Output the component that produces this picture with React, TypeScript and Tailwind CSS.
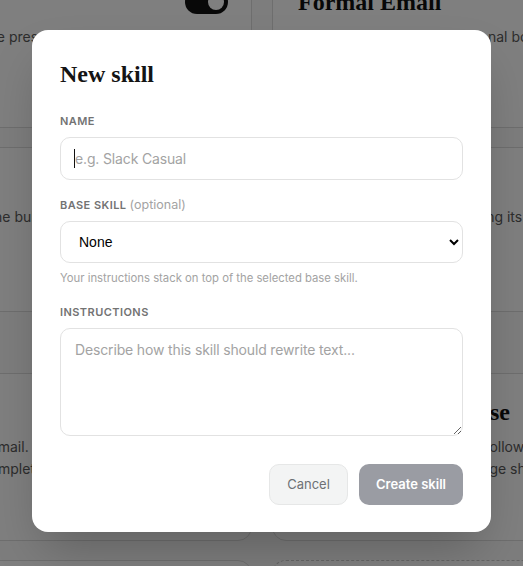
import React from "react";

const sans = { fontFamily: "Inter, 'Noto Sans', sans-serif" };
const serif = { fontFamily: "'Liberation Serif', 'DejaVu Serif', serif" };

function Toggle() {
  return (
    <div className="flex h-[24px] w-[43px] items-center justify-end rounded-full bg-[#111111] p-[4px]">
      <div className="h-[16px] w-[16px] rounded-full bg-white" />
    </div>
  );
}

function SkillCard({
  title,
  lines,
  height,
}: {
  title: string;
  lines: string[];
  height: string;
}) {
  return (
    <div className={`flex flex-col gap-2 rounded-[14px] border border-[#dcdcdc] bg-white pl-[25px] pr-[23px] pt-[22px] ${height}`}>
      <div className="flex items-center justify-between">
        <h3 className="whitespace-nowrap text-[24px] font-bold leading-8 text-[#111]" style={serif}>
          {title}
        </h3>
        <Toggle />
      </div>
      <div className="flex flex-col">
        {lines.map((l) => (
          <p key={l} className="whitespace-nowrap text-[14px] leading-[22px] text-[#5a5a5a]">
            {l}
          </p>
        ))}
      </div>
    </div>
  );
}

function PlainCard({ lines }: { lines: string[] }) {
  return (
    <div className="flex h-[165px] flex-col rounded-[14px] border border-[#dcdcdc] bg-white px-[25px] pt-[58px]">
      {lines.map((l) => (
        <p key={l} className="whitespace-nowrap text-[14px] leading-[22px] text-[#5a5a5a]">
          {l}
        </p>
      ))}
    </div>
  );
}

export default function App() {
  return (
    <div className="relative h-[566px] w-full overflow-hidden bg-[#fafafa]" style={sans}>
      {/* skills grid behind the dialog */}
      <div className="-ml-[94px] -mt-[37px] flex w-[712px] flex-col">
        <div className="grid grid-cols-2 gap-x-5">
          <SkillCard
            title="Brief"
            lines={["Shaves the presentation down to key points."]}
            height="h-[165px]"
          />
          <SkillCard
            title="Formal Email"
            lines={["For email in a clear professional body."]}
            height="h-[165px]"
          />
        </div>
        <div className="mt-[19px] grid grid-cols-2 gap-x-5">
          <PlainCard lines={["Formats the bullet points cleanly."]} />
          <PlainCard lines={["Corrects the grammar, keeping its"]} />
        </div>
        <div className="h-[61px]" />
        <div className="grid grid-cols-2 gap-x-5">
          <SkillCard
            title="Reply"
            lines={["Reply to email. The tone", "Keep it complete and short."]}
            height="h-[168px]"
          />
          <SkillCard
            title="A Friendly Response"
            lines={["Answers in a warmer voice, following the", "in original thread. The message should stay short."]}
            height="h-[168px]"
          />
        </div>
        <div className="mt-[19px] grid grid-cols-2 gap-x-5">
          <div className="h-[80px] rounded-[14px] border border-[#dcdcdc] bg-white" />
          <div className="h-[80px] rounded-[14px] border border-dashed border-[#c9c9c9] bg-white" />
        </div>
      </div>

      {/* dialog */}
      <div className="absolute inset-0 flex justify-center bg-black/50 pt-[30px]">
        <div className="flex h-[502px] w-[459px] flex-col rounded-[16px] bg-white px-7 pt-7 shadow-2xl">
          <h2 className="text-[24px] font-bold leading-8 text-[#141414]" style={serif}>
            New skill
          </h2>

          <label className="mt-[23px] text-[11px] font-semibold uppercase leading-4 tracking-[0.04em] text-[#737373]">
            Name
          </label>
          <div className="relative mt-[8px]">
            <input
              placeholder="e.g. Slack Casual"
              className="h-[43px] w-full rounded-[10px] border border-[#e2e2e2] px-[14px] text-[14px] tracking-[-0.15px] text-[#222] outline-none placeholder:text-[#a3a3a3]"
            />
            {/* text caret */}
            <span className="pointer-events-none absolute left-[14px] top-[12px] h-[19px] w-px bg-[#111]" />
          </div>

          <label className="mt-[17px] text-[11px] leading-4 text-[#737373]">
            <span className="font-semibold uppercase tracking-[0.04em]">Base skill</span>{" "}
            <span className="text-[12.5px] text-[#a3a3a3]">(optional)</span>
          </label>
          <select
            defaultValue="none"
            className="mt-[8px] h-[42px] w-full rounded-[10px] border border-[#e2e2e2] bg-white px-[14px] text-[14px] text-black outline-none"
            style={{ fontFamily: "'Liberation Sans', Arial, sans-serif" }}
          >
            <option value="none">None</option>
            <option value="formal">Formal Email</option>
            <option value="friendly">A Friendly Response</option>
          </select>
          <p className="mt-[7px] text-[11.3px] leading-4 text-[#a3a3a3]">
            Your instructions stack on top of the selected base skill.
          </p>

          <label className="mt-[18px] text-[11px] font-semibold uppercase leading-4 tracking-[0.04em] text-[#737373]">
            Instructions
          </label>
          <textarea
            placeholder="Describe how this skill should rewrite text..."
            className="mt-[8px] h-[108px] w-full rounded-[10px] border border-[#e2e2e2] px-[14px] py-[11px] text-[14px] leading-5 tracking-[-0.15px] text-[#222] outline-none placeholder:text-[#a3a3a3]"
          />

          <div className="mt-[28px] flex justify-end gap-[11px]">
            <button className="h-[41px] w-[79px] rounded-[10px] border border-[#e6e7e7] bg-[#f3f4f4] text-[13px] text-[#6e7175]">
              Cancel
            </button>
            <button className="h-[41px] w-[104px] rounded-[10px] bg-[#9a9ca3] text-[13px] font-semibold text-white">
              Create skill
            </button>
          </div>
        </div>
      </div>
    </div>
  );
}
